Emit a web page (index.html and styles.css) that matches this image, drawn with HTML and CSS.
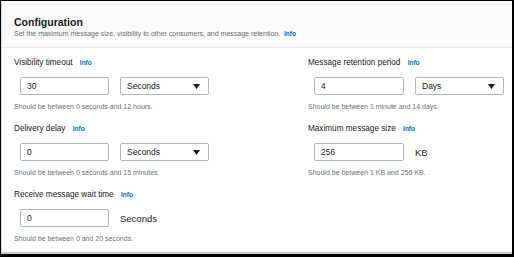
FILE: index.html
```html
<!DOCTYPE html>
<html>
<head>
<meta charset="utf-8">
<link rel="stylesheet" href="styles.css">
</head>
<body>
<div class="frame">
  <div class="panel">
    <div class="header">
      <h2 class="title">Configuration</h2>
      <p class="subtitle">Set the maximum message size, visibility to other consumers, and message retention. <a class="info">Info</a></p>
    </div>
    <div class="content">
      <div class="col">
        <div class="field">
          <div class="label">Visibility timeout <a class="info">Info</a></div>
          <div class="controls">
            <div class="input">30</div>
            <div class="select"><span>Seconds</span><svg class="caret" width="7" height="5" viewBox="0 0 7 5"><path d="M0 0H7L3.5 5Z" fill="#16191f"/></svg></div>
          </div>
          <div class="hint">Should be between 0 seconds and 12 hours.</div>
        </div>
        <div class="field">
          <div class="label">Delivery delay <a class="info">Info</a></div>
          <div class="controls">
            <div class="input">0</div>
            <div class="select"><span>Seconds</span><svg class="caret" width="7" height="5" viewBox="0 0 7 5"><path d="M0 0H7L3.5 5Z" fill="#16191f"/></svg></div>
          </div>
          <div class="hint">Should be between 0 seconds and 15 minutes.</div>
        </div>
        <div class="field">
          <div class="label">Receive message wait time <a class="info">Info</a></div>
          <div class="controls">
            <div class="input">0</div>
            <div class="unit">Seconds</div>
          </div>
          <div class="hint">Should be between 0 and 20 seconds.</div>
        </div>
      </div>
      <div class="col col-right">
        <div class="field">
          <div class="label">Message retention period <a class="info">Info</a></div>
          <div class="controls">
            <div class="input">4</div>
            <div class="select"><span>Days</span><svg class="caret" width="7" height="5" viewBox="0 0 7 5"><path d="M0 0H7L3.5 5Z" fill="#16191f"/></svg></div>
          </div>
          <div class="hint">Should be between 1 minute and 14 days.</div>
        </div>
        <div class="field">
          <div class="label">Maximum message size <a class="info">Info</a></div>
          <div class="controls">
            <div class="input">256</div>
            <div class="unit">KB</div>
          </div>
          <div class="hint">Should be between 1 KB and 256 KB.</div>
        </div>
      </div>
    </div>
  </div>
</div>
</body>
</html>
```
FILE: styles.css
```css
* { box-sizing: border-box; }
html, body { margin: 0; padding: 0; background: #fff; }
body {
  font-family: "Liberation Sans", Arial, sans-serif;
  color: #16191f;
  width: 514px;
  height: 257px;
  overflow: hidden;
}
.frame {
  width: 514px;
  height: 257px;
  border-top: 1px solid #000;
  border-left: 1px solid #000;
  border-right: 2px solid #000;
  border-bottom: 3px solid #000;
}
.panel {
  height: 100%;
  border-left: 1px solid #d5dbdb;
  border-bottom: 2px solid #c6cccc;
  background: #fff;
}
.header {
  background: #fafafa;
  border-bottom: 1px solid #eaeded;
  padding: 14px 12px 0;
  height: 47px;
}
.title {
  margin: 0;
  font-size: 10.5px;
  line-height: 14px;
  font-weight: bold;
  color: #16191f;
}
.subtitle {
  margin: 0;
  font-size: 7px;
  line-height: 10px;
  color: #687078;
}
.subtitle .info { margin-left: 2px; }
.info {
  color: #0073bb;
  font-weight: bold;
  font-size: 6.5px;
}
.content {
  display: grid;
  grid-template-columns: 294px 1fr;
  padding: 9px 8px 0 12px;
}
.field { margin-bottom: 11px; }
.label {
  font-size: 8.2px;
  line-height: 12px;
  color: #16191f;
}
.label .info { margin-left: 5px; }
.controls {
  display: flex;
  align-items: center;
  gap: 11px;
  margin: 8px 0 0 6px;
}
.input, .select {
  width: 89px;
  height: 18px;
  border: 1px solid #aab7b8;
  border-radius: 2px;
  background: #fff;
  font-size: 8.5px;
  display: flex;
  align-items: center;
  padding: 0 6px;
}
.col-right .input { width: 90px; }
.select {
  justify-content: space-between;
  padding-right: 8px;
}
.caret { display: block; }
.unit {
  font-size: 9.5px;
  color: #16191f;
}
.hint {
  margin-top: 7px;
  font-size: 7px;
  line-height: 10px;
  color: #687078;
}
```
